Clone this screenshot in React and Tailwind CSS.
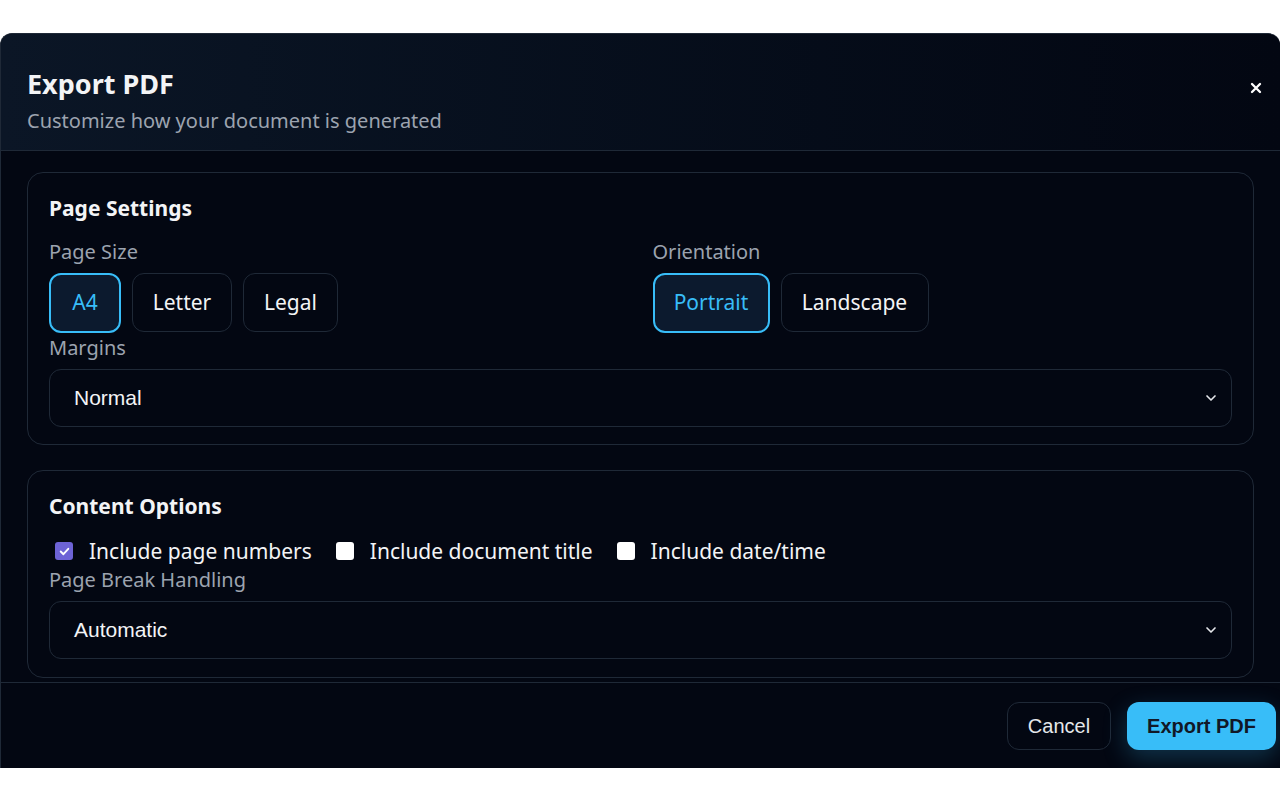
export default function App() {
  const f = { fontFamily: '"Noto Sans", "Open Sans", sans-serif' };
  const a = { fontFamily: '"Liberation Sans", Arial, sans-serif' };
  const Chevron = () => (
    <svg width="16" height="16" viewBox="0 0 24 24" fill="none" stroke="#e5e7eb" strokeWidth="2.5" strokeLinecap="round" strokeLinejoin="round" className="absolute right-[12px] top-1/2 -translate-y-1/2"><path d="M6 9l6 6 6-6" /></svg>
  );
  const Check = ({ on }) => (
    <span className={`w-[18px] h-[18px] rounded-[3px] flex items-center justify-center ${on ? 'bg-[#6d63d6]' : 'bg-white'}`}>
      {on && <svg width="13" height="13" viewBox="0 0 24 24" fill="none" stroke="white" strokeWidth="3.5" strokeLinecap="round" strokeLinejoin="round"><path d="M5 12l5 5 9-10" /></svg>}
    </span>
  );
  return (
    <div className="w-[1280px] h-[800px] bg-white pt-[33px]" style={f}>
      <div className="h-[735px] bg-[#030712] rounded-t-xl border-t border-l border-[#1f2937] flex flex-col overflow-hidden">
        <div className="h-[117px] shrink-0 bg-gradient-to-r from-[#0b1626] to-[#030712] border-b border-[#1f2937] px-[26px] pt-[32px] relative">
          <div className="text-[27px] font-bold text-[#f3f4f6] leading-[36px]">Export PDF</div>
          <div className="text-[20px] text-[#9ca3af] leading-[26px] mt-[6px]">Customize how your document is generated</div>
          <button className="absolute right-[16px] top-[46px] text-white">
            <svg width="16" height="16" viewBox="0 0 24 24" fill="none" stroke="white" strokeWidth="3.5" strokeLinecap="round"><path d="M6 6l12 12M18 6L6 18" /></svg>
          </button>
        </div>
        <div className="flex-1 px-[26px] pt-[21px] flex flex-col gap-[25px]">
          <div className="border border-[#1f2937] rounded-2xl px-[21px] pt-[20px] pb-[17px]">
            <div className="text-[21px] font-bold text-[#f3f4f6] leading-[30px]">Page Settings</div>
            <div className="grid grid-cols-2 gap-x-[24px] mt-[16px]">
              <div>
                <div className="text-[20px] text-[#9ca3af] leading-[26px]">Page Size</div>
                <div className="flex gap-[11px] mt-[8px]">
                  <button className="h-[60px] w-[72px] rounded-xl border-2 border-[#38bdf8] bg-[#0c1a2e] text-[#38bdf8] text-[21px]">A4</button>
                  <button className="h-[59px] w-[100px] rounded-xl border border-[#1f2937] bg-[#030712] text-[#f3f4f6] text-[21px]">Letter</button>
                  <button className="h-[59px] w-[95px] rounded-xl border border-[#1f2937] bg-[#030712] text-[#f3f4f6] text-[21px]">Legal</button>
                </div>
              </div>
              <div>
                <div className="text-[20px] text-[#9ca3af] leading-[26px]">Orientation</div>
                <div className="flex gap-[11px] mt-[8px]">
                  <button className="h-[60px] w-[117px] rounded-xl border-2 border-[#38bdf8] bg-[#0c1a2e] text-[#38bdf8] text-[21px]">Portrait</button>
                  <button className="h-[59px] w-[148px] rounded-xl border border-[#1f2937] bg-[#030712] text-[#f3f4f6] text-[21px]">Landscape</button>
                </div>
              </div>
            </div>
            <div className="text-[20px] text-[#9ca3af] leading-[26px] mt-[2px]">Margins</div>
            <div className="relative mt-[8px] h-[58px] rounded-xl border border-[#1f2937] flex items-center px-[24px] text-[21px] text-[#f3f4f6]" style={a}>
              Normal<Chevron />
            </div>
          </div>
          <div className="border border-[#1f2937] rounded-2xl px-[21px] pt-[20px] pb-[18px]">
            <div className="text-[21px] font-bold text-[#f3f4f6] leading-[30px]">Content Options</div>
            <div className="flex items-center mt-[16px] text-[21px] text-[#f3f4f6] leading-[28px] pl-[6px]">
              <Check on /><span className="ml-[16px] mr-[24px]">Include page numbers</span>
              <Check /><span className="ml-[16px] mr-[24px]">Include document title</span>
              <Check /><span className="ml-[16px]">Include date/time</span>
            </div>
            <div className="text-[20px] text-[#9ca3af] leading-[26px] mt-[2px]">Page Break Handling</div>
            <div className="relative mt-[8px] h-[58px] rounded-xl border border-[#1f2937] flex items-center px-[24px] text-[21px] text-[#f3f4f6]" style={a}>
              Automatic<Chevron />
            </div>
          </div>
        </div>
        <div className="h-[86px] shrink-0 border-t border-[#1f2937] flex items-center justify-end gap-[16px] pr-[4px]" style={a}>
          <button className="h-[48px] w-[104px] rounded-xl border border-[#1f2937] text-[#e5e7eb] text-[20px]">Cancel</button>
          <button className="h-[48px] w-[149px] rounded-xl bg-[#38bdf8] text-[#111827] text-[20px] font-semibold shadow-[0_8px_24px_rgba(56,189,248,0.25)]">Export PDF</button>
        </div>
      </div>
    </div>
  );
}
